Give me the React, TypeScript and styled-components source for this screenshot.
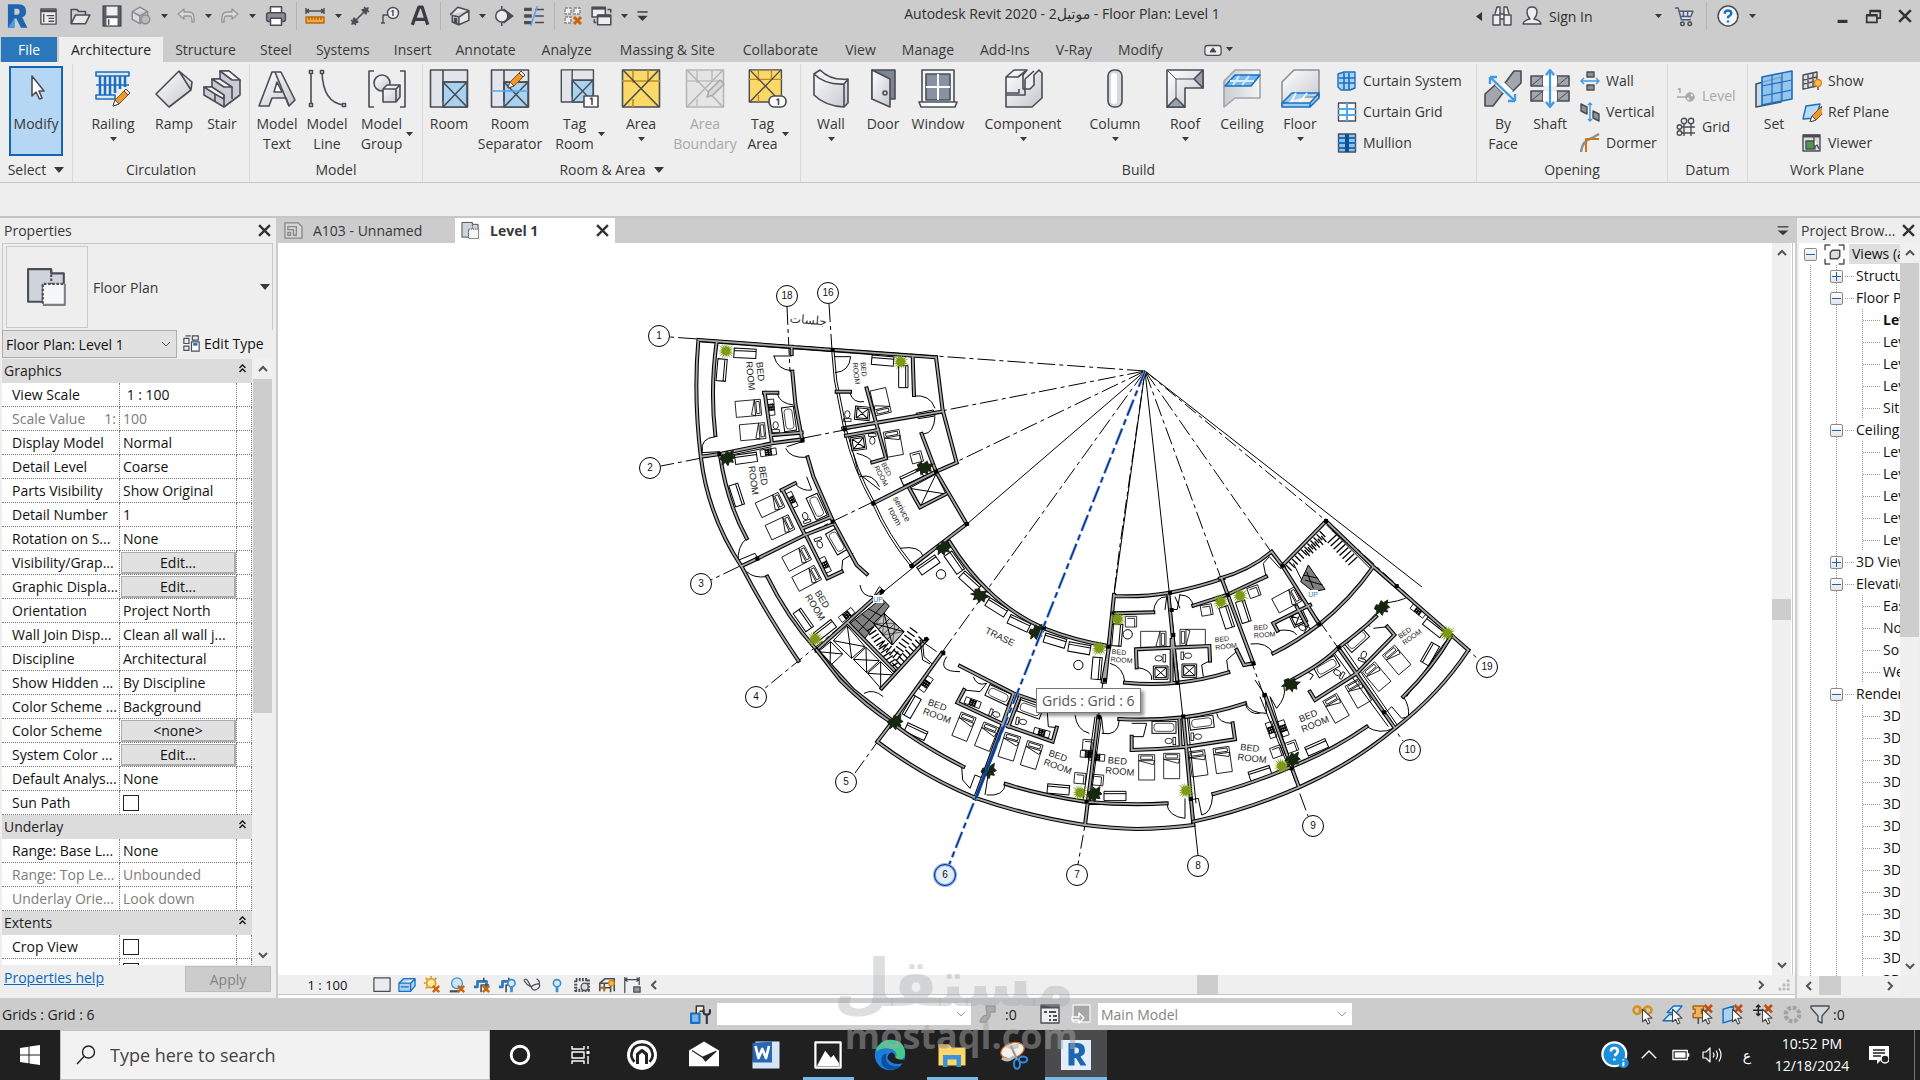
import React from "react";
import styled, { createGlobalStyle, css } from "styled-components";

const UI = `"Open Sans", "Noto Sans", "DejaVu Sans", sans-serif`;
const C = { bar: "#cccccc", light: "#eeeeee", line: "#c8c8c8", ink: "#383838", dark: "#4a4d55", blue: "#1b6fc0", sky: "#a9d1f0", task: "#202020" };

const Global = createGlobalStyle`
  *, *::before, *::after { box-sizing: border-box; }
  html, body { margin: 0; padding: 0; }
  body { font-family: ${UI}; font-size: 14px; color: ${C.ink}; overflow: hidden; }
  button, input, select { font: inherit; color: inherit; margin: 0; }
  button { border: 0; padding: 0; background: none; }
  svg { display: block; flex: none; }
`;

/* ---------- shared parts ---------- */
const Shell = styled.div`display: flex; flex-direction: column; height: 100vh; background: ${C.bar}; position: relative; overflow: hidden;`;
const IconButton = styled.button<{ $w?: number }>`
  display: flex; align-items: center; justify-content: center; flex: none; width: ${p => p.$w ?? 28}px; height: 100%;
`;
const Sep = styled.span<{ $w: number }>`width: ${p => p.$w}px; display: flex; justify-content: center; height: 28px; &::before { content: ""; width: 1px; background: #b4b4b4; }`;

type IcoProps = { s?: number; w?: number; vb?: string; children: React.ReactNode };
const Ico = ({ s = 22, w, vb = "0 0 20 20", children }: IcoProps) => (
  <svg width={w ?? s} height={s} viewBox={vb} fill="none" stroke={C.dark} strokeWidth="1.4" strokeLinejoin="round" aria-hidden="true">{children}</svg>
);
const Caret = ({ s = 7 }: { s?: number }) => (
  <svg width={s} height={s * 0.6} viewBox="0 0 10 6" aria-hidden="true"><path d="M0 0H10L5 6Z" fill="#3a3a3a" /></svg>
);
const Cross = ({ s = 13 }: { s?: number }) => (
  <svg width={s} height={s} viewBox="0 0 12 12" aria-hidden="true"><path d="M1 1L11 11M11 1L1 11" stroke="#333" strokeWidth="2.2" /></svg>
);
const Chevron = ({ r = 0, c = "#555", w = 2 }: { r?: number; c?: string; w?: number }) => (
  <svg width="10" height="10" viewBox="0 0 10 10" aria-hidden="true"><path d="M1 3L5 7L9 3" transform={`rotate(${r} 5 5)`} fill="none" stroke={c} strokeWidth={w} /></svg>
);

/* ---------- title bar ---------- */
const TitleBar = styled.header`display: flex; align-items: center; height: 37px; padding-bottom: 5px; flex: none; color: #2f2f2f;`;
const Title = styled.h1`flex: 1; margin: 0; padding-bottom: 6px; font-size: 14px; font-weight: 400; text-align: center; white-space: nowrap;`;
const SignIn = styled.button`display: flex; align-items: center; height: 100%; width: 104px; padding-left: 3px;`;
const WindowButtons = styled.div`display: flex; height: 100%; margin-left: 69px;`;

const cursor = <path d="M1 0V12L4 9.500L6 14L8 13L6 8.500H10Z" fill="#fff" stroke="#444" strokeWidth="1" />;
const qat: [string, number, React.ReactNode][] = [
  ["Revit menu", 34, <Ico s={26} key="i"><path d="M3 1H11Q17 1 17 6.500Q17 10 14 11L18 19H13L9.500 12H8V19H3Z" fill="#1f66b0" stroke="none" /><path d="M8 4.500H10Q12 4.500 12 6.700Q12 9 10 9H8Z" fill="#ccc" stroke="none" /><path d="M3 19L8 12V19Z" fill="#4f9be0" stroke="none" /></Ico>],
  ["Properties", 28, <Ico key="i" s={19}><rect x="2" y="2" width="16" height="16" fill="#eee" /><path d="M2 4H18" strokeWidth="3" /><path d="M5 7V16M8 9H16M10 12H16M10 15H16" /></Ico>],
  ["Open", 36, <Ico key="i"><path d="M2 17V4H7L9 6H15V9" /><path d="M2 17L6 9H19L15 17Z" fill="#e6e8ea" /></Ico>],
  ["Save", 28, <Ico key="i"><path d="M2 1H18V19H2Z" fill="#5b5e66" /><rect x="5" y="1.500" width="10" height="8" fill="#eee" stroke="none" /><rect x="5" y="12" width="10" height="6.500" fill="#fff" stroke="none" /><path d="M7 13V18" /></Ico>],
  ["Synchronize", 30, <Ico key="i"><g stroke="#8b8d92"><path d="M2 6L9 2L16 6V13L9 17L2 13ZM2 6L9 10L16 6M9 10V17" fill="#d9dadc" /><circle cx="14" cy="13" r="4" fill="#b9bbbf" /></g></Ico>],
  ["caret", 16, null],
  ["Undo", 28, <Ico key="i" s={20}><path d="M8 3L2 8L8 13V10H14Q16 10 16 16H18Q19 6 13 6H8Z" stroke="#96989c" fill="#dadada" /></Ico>],
  ["caret", 16, null],
  ["Redo", 28, <Ico key="i" s={20}><path d="M12 3L18 8L12 13V10H6Q4 10 4 16H2Q1 6 7 6H12Z" stroke="#96989c" fill="#dadada" /></Ico>],
  ["caret", 16, null],
  ["Print", 32, <Ico key="i"><rect x="5" y="1.500" width="10" height="6" fill="#fff" /><rect x="1.500" y="7" width="17" height="8" rx="2" fill="#8b8e95" /><rect x="5" y="12" width="10" height="6.500" fill="#fff" /></Ico>],
  ["sep", 8, null],
  ["Measure", 30, <Ico key="i" s={20}><path d="M1 5H19M1 2V8M19 2V8M4 3L1 5L4 7M16 3L19 5L16 7" /><rect x="1" y="11" width="18" height="6" fill="#f5a93c" stroke="#b56a10" /><path d="M4 11V14M7 11V14M10 11V14M13 11V14M16 11V14" stroke="#b56a10" /></Ico>],
  ["caret", 16, null],
  ["Aligned dimension", 28, <Ico key="i" s={20}><path d="M5 15L15 5" strokeWidth="1.600" /><path d="M2 18L4 12L8 16ZM18 2L12 4L16 8Z" fill={C.dark} /><path d="M1 14L6 19M14 1L19 6" /></Ico>],
  ["Tag by category", 32, <Ico key="i" s={20}><circle cx="13" cy="7" r="5.500" fill="#eee" /><path d="M11.500 5.500L13 4.500V10M8 9H3V17M1 17H5" /></Ico>],
  ["Text", 28, <Ico key="i"><path d="M3 18L9 2H12L17 18M5 13H15" strokeWidth="3" stroke="#3b3d44" /></Ico>],
  ["sep", 12, null],
  ["Default 3D view", 28, <Ico key="i"><path d="M1 9L8 2L18 5L18 14L9 18L3 15.500V9.500L9 11L18 5M9 11V18" fill="#e4e6e9" /><path d="M5 12V16L7 17V12.500Z" fill={C.dark} /></Ico>],
  ["caret", 16, null],
  ["Section", 28, <Ico key="i"><path d="M8 1V5M8 15V19M10 4L18 10L10 16Z" fill={C.dark} /><circle cx="8" cy="10" r="5.500" fill="#eee" /></Ico>],
  ["Thin lines", 32, <Ico key="i"><path d="M1 4H8M1 10H8M1 16H8" strokeWidth="3" /><path d="M11 4H19M11 10H19M11 16H19" /><path d="M13 1L7 19" stroke="#4fa8ee" /></Ico>],
  ["sep", 8, null],
  ["Close hidden windows", 30, <Ico key="i" s={20}><path d="M2 2H8V8H2ZM11 2H17V8H11ZM2 11H8V17H2Z" fill="#eee" stroke="#888" strokeDasharray="3 1" /><path d="M11 11L18 18M18 11L11 18" stroke="#c8640e" strokeWidth="3" /></Ico>],
  ["Switch windows", 28, <Ico key="i"><rect x="1" y="2" width="12" height="9" fill="#eee" /><path d="M1 3H13" strokeWidth="2.500" /><rect x="6" y="9" width="12" height="9" fill="#eee" /><path d="M6 10H18" strokeWidth="2.500" /><path d="M15 4H18V7M3 13V16H5" /></Ico>],
  ["caret", 16, null],
  ["Customize", 20, <Ico key="i" s={13}><path d="M2 3H18" strokeWidth="2.500" /><path d="M2 9H18L10 17Z" fill="#3a3a3a" stroke="none" /></Ico>],
];

/* ---------- ribbon tabs ---------- */
const Tabs = styled.nav`display: flex; align-items: stretch; height: 25px; flex: none; padding-left: 1px;`;
const Tab = styled.button<{ $kind?: "file" | "active"; $pad?: number }>`
  padding: 0 ${p => p.$pad ?? 12}px; white-space: nowrap; height: 25px; line-height: 24px; font-size: 14px; color: #3a3a3a;
  ${p => p.$kind === "file" && css`background: #2a77bb; color: #fff; width: 56px; padding: 0; margin-right: 2px;`}
  ${p => p.$kind === "active" && css`background: ${C.light}; color: #222;`}
`;
const tabNames: [string, number][] = [["Structure", 12], ["Steel", 12], ["Systems", 12], ["Insert", 12], ["Annotate", 12], ["Analyze", 14], ["Massing & Site", 14], ["Collaborate", 14], ["View", 13], ["Manage", 13], ["Add-Ins", 13], ["V-Ray", 13], ["Modify", 13]];

/* ---------- ribbon ---------- */
const Ribbon = styled.section`display: flex; height: 121px; flex: none; background: ${C.light}; border-bottom: 1px solid ${C.line}; padding-top: 2px;`;
const Panel = styled.div<{ $w: number; $pad: number }>`
  display: flex; flex-direction: column; flex: 0 0 ${p => p.$w}px; border-right: 1px solid #d8d8d8; padding-left: ${p => p.$pad}px;
  &:last-child { border-right: 0; }
`;
const PanelBody = styled.div`display: flex; flex: 1; align-items: flex-start;`;
const PanelTitle = styled.div<{ $shift: number }>`height: 24px; margin-left: -${p => p.$shift}px; display: flex; align-items: center; justify-content: center; gap: 8px; font-size: 14px; line-height: 20px;`;
const Tool = styled.button<{ $w: number; $on?: boolean }>`
  width: ${p => p.$w}px; height: 90px; margin-top: 2px; display: flex; flex-direction: column; align-items: center; flex: none; padding-top: 3px; font-size: 14px; line-height: 20px; white-space: nowrap;
  &:disabled { color: #a8a8a8; }
  ${p => p.$on && css`background: #b5d7f3; border: 2px solid #1465b4; padding-top: 1px;`}
`;
const ToolLabel = styled.span`margin: 5px 0 3px; display: flex; align-items: center; gap: 4px; text-align: center; white-space: pre;`;
const Stack = styled.div<{ $top: number; $left: number }>`display: flex; flex-direction: column; padding: ${p => p.$top}px 0 0 ${p => p.$left}px;`;
const SmallTool = styled.button`display: flex; align-items: center; gap: 6px; height: 31px; font-size: 14px; white-space: nowrap; &:disabled { color: #a8a8a8; }`;
const Options = styled.div`height: 33px; flex: none; background: ${C.light};`;

const Big = ({ children }: { children?: React.ReactNode }) => (
  <svg width="40" height="40" viewBox="0 0 40 40" fill="none" stroke={C.dark} strokeWidth="1.6" strokeLinejoin="round" aria-hidden="true">
    <defs>
      <linearGradient id="steel" x1="0" y1="0" x2="1" y2="1"><stop offset="0" stopColor="#ffffff" /><stop offset="1" stopColor="#c3c7cd" /></linearGradient>
      <linearGradient id="grey" x1="0" y1="0" x2="1" y2="0"><stop offset="0" stopColor="#c9cdd2" /><stop offset="1" stopColor="#f4f5f6" /></linearGradient>
    </defs>
    {children}
  </svg>
);
const Pencil = ({ x, y }: { x: number; y: number }) => (
  <g transform={`translate(${x} ${y})`} strokeWidth="1"><path d="M0 17L2 11L13 0L17 4L6 15Z" fill="#f0982c" stroke="#8a4a10" /><path d="M0 17L2 11L6 15Z" fill="#fff" /><path d="M11 2L15 6L17 4L13 0Z" fill="#fde2b8" /></g>
);
const RoomBase = ({ y = false, dim = false, s = 38 }: { y?: boolean; dim?: boolean; s?: number }) => (
  <g stroke={dim ? "#b5b5b5" : C.dark} transform={`scale(${s / 38})`}>
    <rect x="1.500" y="1" width="37" height="37" fill={dim ? "#e4e4e4" : y ? "#fbd966" : "#e2e5e9"} />
    {y || dim ? <><path d="M1 12H39M12 1V14M12 30V38M27 12V1" strokeWidth="1.600" stroke={dim ? "#c0c0c0" : "#c08a2a"} /><path d="M2 1L38 38M38 1L2 38" /></> : <><rect x="14" y="13" width="24" height="25" fill={C.sky} /><path d="M14 1V32M14 13H38M14 13L38 38M38 13L14 38" /></>}
  </g>
);
const icons: Record<string, React.ReactNode> = {
  modify: <path d="M16 7V27L20 23L23.500 30L26 29L23 22H28Z" fill="#fff" />,
  railing: <><path d="M7 7V26M12 7V26M17 7V26M22 7V24M27 7V20M32 7V18" stroke={C.blue} strokeWidth="2.600" /><path d="M3 3H36V7H3ZM3 26H22V30H3Z" fill="#dfe6ee" stroke={C.blue} /><path d="M3 16H36" stroke={C.blue} /><Pencil x={20} y={20} /></>,
  ramp: <path d="M2 25L25 2L38 13L37 21L15 38ZM25 2L37 21M2 25L15 38" fill="url(#steel)" />,
  stair: <><path d="M2 18H10L10 10H18V2H27L38 11V26L22 38L2 26Z" fill="#c9ccd2" /><path d="M2 18H10L22 26V30L13 25ZM10 10H18L30 18H22ZM18 2H27L38 11H30Z" fill="#f6f6f7" /><path d="M13 25V33M30 18V30M22 26V37" /></>,
  text: <><path d="M2 37L15 3H24L38 31L32 37L29 29H15L12 37Z" fill="url(#steel)" /><path d="M17 23L20 13L25 23Z" fill="#fff" /><path d="M18 3L32 37" /></>,
  line: <><path d="M4 3V36M15 3Q16 34 37 36" /><path d="M2.500 1.500H5.500V4.500H2.500ZM2.500 34.500H5.500V37.500H2.500ZM13.500 1.500H16.500V4.500H13.500ZM35.500 34.500H38.500V37.500H35.500Z" fill="#fff" /></>,
  group: <><path d="M7 2H2V38H7M33 2H38V38H33" /><circle cx="15" cy="14" r="8" fill="url(#steel)" /><path d="M16 20L20 16H33V28L29 33H16Z" fill="url(#steel)" /><path d="M16 20H29V33M29 20L33 16" /></>,
  room: <RoomBase />,
  roomsep: <><RoomBase /><path d="M1.500 22H38" stroke="#4fa8ee" /><Pencil x={18} y={2} /></>,
  tagroom: <><RoomBase s={33} /><rect x="24" y="27" width="14" height="11" fill="#fff" /><path d="M30 30L32 29V36" /></>,
  area: <RoomBase y />,
  areab: <><RoomBase dim /><path d="M22 28L24 22L35 11L39 15L28 26Z" fill="#d8d8d8" stroke="#aaa" /></>,
  tagarea: <><RoomBase y s={33} /><rect x="21" y="27" width="17" height="11" rx="5" fill="#fff" /><path d="M28.500 31L30.500 30V36" /></>,
  wall: <path d="M3 5L9 1Q20 12 37 10V34L33 38Q14 37 3 26ZM3 5Q14 16 33 15L37 10M33 15V38" fill="url(#steel)" />,
  door: <><path d="M9 1H32V30H9Z" fill="#7d8595" /><path d="M9 1L27 10V38L9 30Z" fill="url(#steel)" /><circle cx="22" cy="24" r="2" /></>,
  window: <><rect x="4" y="1" width="32" height="33" fill="#f4f4f4" /><rect x="8" y="5" width="24" height="26" fill="#8792a3" /><path d="M20 5V31M8 18H32" stroke="#fff" strokeWidth="2" /><path d="M1 33H39L37 38H3Z" fill="#fff" /></>,
  component: <path d="M3 8L11 1H24L20 6V20H27L31 16V6L36 1L39 4V29L29 38H3ZM3 8H15L24 1M3 24H16V20M22 10V26H3M22 10L31 2" fill="url(#steel)" />,
  column: <><rect x="13" y="1" width="14" height="37" rx="6" fill="#d5d8dd" /><rect x="16" y="4" width="6" height="31" rx="3" fill="#fff" stroke="none" /></>,
  roof: <><path d="M2 1H38V19H20V38H2Z" fill="url(#steel)" /><path d="M38 1V19L29 10ZM2 38H20L11 29Z" fill="#9aa1ad" /><path d="M2 1L11 10V29M11 10H29M11 29L2 38M29 10L38 1" strokeWidth="1" /></>,
  ceiling: <><path d="M2 12L13 1H38V29H13L2 38Z" fill="url(#grey)" stroke="#a0a4aa" /><path d="M13 6H38L29 17H3Z" fill="#78b8ee" stroke={C.blue} /><path d="M17 7L11 16M27 7L20 16M8 12H32" stroke="#d7edff" strokeWidth="2" /></>,
  floor: <><path d="M2 13L14 1H39V28H14L2 36Z" fill="url(#steel)" stroke="#8d9198" /><path d="M12 24H39L30 34H2ZM2 34V38H30L39 29V24M30 34V38" fill="#9ccdf2" stroke={C.blue} /><path d="M16 24L11 33M27 24L20 33" stroke="#fff" /></>,
  byface: <><path d="M22 14L31 2H38V14L30 22ZM2 25L12 16L20 24L10 37H2Z" fill="#a2a6ad" /><path d="M12 16L22 14L30 22L20 24Z" fill="#fff" stroke="none" /><path d="M7 8L32 32M7 8V15M7 8H14M32 32V25M32 32H25" stroke="#3f9be6" strokeWidth="2.400" /></>,
  shaft: <><path d="M1 7H13V17H1ZM27 7H39V17H27ZM1 22H13V32H1ZM27 22H39V32H27Z" fill="#a2a6ad" /><path d="M13 7H27V17H13ZM13 22H27V32H13Z" fill="#fff" stroke="none" /><path d="M1 17L13 7M27 17L39 7M1 32L13 22M27 32L39 22" strokeWidth="1" /><path d="M20 2V37M16 6L20 1L24 6M16 33L20 38L24 33" stroke="#3f9be6" strokeWidth="2.200" /></>,
  set: <><path d="M2 15L27 8V33L2 38Z" fill="#c7ddee" /><path d="M8 8L38 2V30L8 36Z" fill="#82bcea" fillOpacity=".8" stroke={C.blue} /><path d="M18 6V34M28 4V32M8 17L38 11M8 27L38 21" stroke={C.blue} strokeWidth="1.200" /></>,
};
const small: Record<string, React.ReactNode> = {
  "Curtain System": <><path d="M1 3L7 1H18V17L13 19H4L1 16Z" fill="#a9d1f0" stroke={C.blue} /><path d="M2 7H18M2 12H18M7 2V19M12 2V19" stroke={C.blue} strokeWidth="1.600" /></>,
  "Curtain Grid": <><rect x="1.500" y="1" width="17" height="18" fill="#fff" /><path d="M10 1V19M1 7H19M1 13H19" stroke="#4fa8ee" strokeWidth="2" /></>,
  Mullion: <><rect x="1.500" y="1" width="17" height="18" fill="#8fc1ea" /><path d="M1 5H19M1 10H19M1 15H19" stroke={C.blue} strokeWidth="2" /><path d="M10 1V19" stroke="#0f4f96" strokeWidth="4" /></>,
  Wall: <><path d="M7 1H14V6H7ZM7 14H14V19H7Z" fill="#8d9097" /><path d="M1 10H19M4 7L1 10L4 13M16 7L19 10L16 13" stroke="#3f9be6" /></>,
  Vertical: <><path d="M1 2L7 5V12L1 9ZM13 9L19 12V19L13 16Z" fill="#8d9097" /><path d="M10 1V19M8 3L10 1L12 3M8 17L10 19L12 17" stroke="#3f9be6" /></>,
  Dormer: <><path d="M1 19Q2 8 12 5L19 1" stroke="#8d9097" strokeWidth="2.500" /><path d="M6 19V6H19" stroke="#c8781e" strokeWidth="2" /></>,
  Level: <g stroke="#a8a8a8"><path d="M1 11H10M2 3.500L4 2.500V7" /><circle cx="14" cy="11" r="4" /><path d="M10 11H14V7ZM14 11H18L14 15Z" fill="#a8a8a8" /></g>,
  Grid: <><path d="M8 7V19M15 7V19M6 10H19M6 16H19" /><circle cx="8" cy="4" r="2.700" /><circle cx="15" cy="4" r="2.700" /><circle cx="3.500" cy="10" r="2.300" /><circle cx="3.500" cy="16" r="2.300" /></>,
  Show: <><path d="M1 4L15 1V15L1 18ZM6 3V17M11 2V16M1 9L15 6M1 13L15 10" fill="#dcdcdc" /><circle cx="16" cy="12" r="3.500" fill="#ffc04a" stroke="#d98318" /><path d="M16 16V19" /></>,
  "Ref Plane": <><path d="M4 4L18 2L14 16L1 17Z" fill="#b8daf5" stroke={C.blue} /><Pencil x={8} y={3} /></>,
  Viewer: <><rect x="1" y="2" width="17" height="16" fill="#ddd" /><path d="M1 3H18" strokeWidth="3" /><rect x="4" y="8" width="9" height="8" fill="#4c9a4c" /><path d="M12 4V14L15 12L17 16" fill="#fff" /></>,
};
type ToolDef = [label: string, icon: string, width: number, arrow?: "below" | "side", off?: boolean];
const ToolButton = ({ d }: { d: ToolDef }) => (
  <Tool $w={d[2]} disabled={d[4]} $on={d[1] === "modify"}>
    <Big>{icons[d[1]]}</Big>
    <ToolLabel>{d[0]}{d[3] === "side" && <Caret />}</ToolLabel>
    {d[3] === "below" && <Caret />}
  </Tool>
);
const SmallList = ({ names, top = 1, left, off }: { names: string[]; top?: number; left: number; off?: string }) => (
  <Stack $top={top} $left={left}>{names.map(n => <SmallTool key={n} disabled={n === off}><Ico s={20}>{small[n]}</Ico>{n}</SmallTool>)}</Stack>
);
const P = ({ title, w, pad, tools, arrow, children }: { title: string; w: number; pad: number; tools: ToolDef[]; arrow?: boolean; children?: React.ReactNode }) => (
  <Panel $w={w} $pad={pad}>
    <PanelBody>{tools.map(t => <ToolButton key={t[0]} d={t} />)}{children}</PanelBody>
    <PanelTitle $shift={pad}>{title}{arrow && <Caret s={10} />}</PanelTitle>
  </Panel>
);

/* ---------- work area ---------- */
const Work = styled.main`display: flex; flex: 1; min-height: 0; border-top: 2px solid #c6c6c6;`;
const PaneHead = styled.div`display: flex; align-items: center; justify-content: space-between; height: 25px; flex: none; padding: 0 5px 0 4px; font-size: 14px; white-space: nowrap;`;
const Props = styled.aside`width: 276px; flex: none; background: ${C.light}; display: flex; flex-direction: column; margin-right: 2px;`;
const TypeBox = styled.button`display: flex; align-items: center; height: 87px; flex: none; margin: 0 3px 0 2px; border: 1px solid ${C.line}; border-bottom: 0; padding: 2px 2px 2px 3px; text-align: left;`;
const Thumb = styled.span`width: 82px; height: 82px; border: 1px solid #c9c9c9; display: flex; align-items: center; justify-content: center; margin-right: 5px;`;
const Grow = styled.span`flex: 1;`;
const InstanceRow = styled.div`display: flex; height: 29px; flex: none; padding: 0 0 1px 2px; gap: 6px; align-items: center; color: #111;`;
const SelectBox = styled.span<{ $w: number; $white?: boolean }>`
  display: grid; width: ${p => p.$w}px; height: ${p => (p.$white ? 22 : 28)}px; align-items: center; background: ${p => (p.$white ? "#fff" : "#e1e1e1")}; border: ${p => (p.$white ? 0 : 1)}px solid #adadad;
  > * { grid-area: 1 / 1; } > svg { justify-self: end; margin-right: 5px; pointer-events: none; }
`;
const Select = styled.select`appearance: none; border: 0; background: transparent; width: 100%; height: 100%; padding: 0 20px 0 3px; outline: 0; font-size: 14px;`;
const EditType = styled.button`display: flex; align-items: center; gap: 4px; height: 26px; padding-bottom: 2px;`;
const GridWrap = styled.div`flex: 1; min-height: 0; display: flex; padding: 0 4px 0 2px;`;
const TableClip = styled.div`flex: 1; overflow: hidden; background: #fff; margin-right: 1px;`;
const Table = styled.table`width: 250px; table-layout: fixed; border-collapse: separate; border-spacing: 0; font-size: 14px; color: #111;`;
const Section = styled.th`height: 24px; padding: 0; background: #dcdcdc; font-weight: 400; text-align: left; color: #222; > span { display: flex; align-items: center; justify-content: space-between; padding: 0 6px 0 2px; line-height: 22px; } svg { margin-bottom: 6px; }`;
const Cell = styled.td<{ $dim?: boolean; $name?: boolean }>`
  height: 24px; padding: 0 0 0 ${p => (p.$name ? 10 : 3)}px; line-height: 20px; white-space: pre; overflow: hidden; border-bottom: 1px dotted #777; border-right: 1px dotted #777; color: ${p => (p.$dim ? "#7d7d78" : "#111")};
`;
const NameLine = styled.label`display: flex; justify-content: space-between; padding-right: 3px;`;
const CellButton = styled.button`display: block; width: 115px; height: 22px; margin: 1px 0 0 -2px; line-height: 19px; background: #e1e1e1; border: 1px solid #adadad; border-right-width: 2px; border-bottom-width: 2px;`;
const Check = styled.input`appearance: none; display: block; width: 16px; height: 16px; border: 1px solid #222; background: #fff;`;
const Foot = styled.div`height: 33px; flex: none; display: flex; align-items: center; justify-content: space-between; padding: 0 5px 5px 4px; a { color: #0a66c0; height: 22px; } button { width: 86px; height: 26px; background: ${C.bar}; border: 1px solid #bdbdbd; color: #838383; }`;

const VBar = styled.div<{ $center?: boolean; $t: string }>`
  width: 19px; flex: none; background: #f0f0f0; display: flex; flex-direction: column;
  > button { height: 20px; display: flex; align-items: center; justify-content: center; }
  > div { flex: 1; min-height: 0; display: flex; flex-direction: column; justify-content: ${p => (p.$center ? "center" : "flex-start")}; }
  > div > span { height: ${p => p.$t}; background: #cdcdcd; }
`;
const VScroll = ({ t, center }: { t: string; center?: boolean }) => (
  <VBar $t={t} $center={center}><button aria-label="Scroll up"><Chevron r={180} /></button><div><span /></div><button aria-label="Scroll down"><Chevron /></button></VBar>
);

const propRows: (string | [string, string, ("dim" | "btn" | "check")?])[] = [
  "Graphics", ["View Scale", " 1 : 100"], ["Scale Value|1:", "100", "dim"], ["Display Model", "Normal"], ["Detail Level", "Coarse"], ["Parts Visibility", "Show Original"],
  ["Detail Number", "1"], ["Rotation on S...", "None"], ["Visibility/Grap...", "Edit...", "btn"], ["Graphic Displa...", "Edit...", "btn"], ["Orientation", "Project North"],
  ["Wall Join Disp...", "Clean all wall j..."], ["Discipline", "Architectural"], ["Show Hidden ...", "By Discipline"], ["Color Scheme ...", "Background"], ["Color Scheme", "<none>", "btn"],
  ["System Color ...", "Edit...", "btn"], ["Default Analys...", "None"], ["Sun Path", "", "check"], "Underlay", ["Range: Base L...", "None"], ["Range: Top Le...", "Unbounded", "dim"],
  ["Underlay Orie...", "Look down", "dim"], "Extents", ["Crop View", "", "check"], ["", "", "check"],
];
const PlanIcon = ({ s }: { s: number }) => (
  <Ico s={s}>
    <path d="M1 1.500H12V3.500H18V9H8V17H1Z" fill="#cfd4da" strokeWidth="1" />
    <rect x="8" y="8.500" width="10.500" height="10" fill="#f6f7f8" stroke="none" />
    <path d="M18.500 8.500V18.500H8" strokeWidth="1" stroke="#7d8087" />
    <path d="M12 2V8.500M8 18V8.500H18" strokeWidth="1" strokeDasharray="1.200 .8" />
  </Ico>
);

function PropertiesPane() {
  return (
    <Props>
      <PaneHead>Properties<button aria-label="Close properties"><Cross /></button></PaneHead>
      <TypeBox><Thumb><PlanIcon s={42} /></Thumb>Floor Plan<Grow /><Caret s={10} /></TypeBox>
      <InstanceRow>
        <SelectBox $w={175}><Select aria-label="Instance"><option>Floor Plan: Level 1</option></Select><Chevron w={1} /></SelectBox>
        <EditType><Ico s={17}><path d="M1 4H7V10H1ZM3 1H9M11 1H18V6H11ZM1 13H7V18H1Z" fill="#eee" /><rect x="10" y="8" width="9" height="11" fill="#fff" /><path d="M12 11H17" stroke={C.blue} strokeWidth="3" /></Ico>Edit Type</EditType>
      </InstanceRow>
      <GridWrap>
        <TableClip>
          <Table>
            <colgroup><col width="118" /><col width="117" /><col width="15" /></colgroup>
            <tbody>
              {propRows.map((r, i) => {
                if (typeof r === "string") return (
                  <tr key={i}><Section colSpan={3} scope="rowgroup"><span>{r}<svg width="7" height="9" viewBox="0 0 7 9" aria-hidden="true"><path d="M.5 4L3.500 1L6.500 4M.5 8L3.500 5L6.500 8" fill="none" stroke="#111" strokeWidth="1.300" /></svg></span></Section></tr>
                );
                const [n, v, k] = r;
                const [a, b] = n.split("|");
                return (
                  <tr key={i}>
                    <Cell $name $dim={k === "dim"}><NameLine htmlFor={k === "check" ? `p${i}` : undefined}>{a}{b && <span>{b}</span>}</NameLine></Cell>
                    <Cell $dim={k === "dim"}>
                      {k === "btn" ? <CellButton>{v}</CellButton> : k === "check" ? <Check type="checkbox" id={`p${i}`} aria-label={a || "Crop region"} /> : v}
                    </Cell>
                    <Cell />
                  </tr>
                );
              })}
            </tbody>
          </Table>
        </TableClip>
        <VScroll t="59%" />
      </GridWrap>
      <Foot><a href="#help">Properties help</a><button disabled>Apply</button></Foot>
    </Props>
  );
}

/* ---------- document area ---------- */
const Doc = styled.section`flex: 1; min-width: 0; display: flex; flex-direction: column; background: ${C.bar};`;
const DocTabs = styled.div`display: flex; height: 25px; flex: none; align-items: stretch;`;
const DocTab = styled.button<{ $on?: boolean }>`
  width: ${p => (p.$on ? 160 : 177)}px; display: flex; align-items: center; gap: 10px; padding: 0 6px; text-align: left; font-size: 14px;
  background: ${p => (p.$on ? "#fff" : "transparent")}; font-weight: ${p => (p.$on ? 700 : 400)};
`;
const CanvasRow = styled.div`flex: 1; min-height: 0; display: flex; background: #fff; padding-right: 2px; border-right: 2px solid #fff; box-shadow: inset -1px 0 #c8c8c8;`;
const Canvas = styled.div`flex: 1; min-width: 0; position: relative; > svg { width: 100%; height: 100%; }`;
const Tip = styled.div`position: absolute; left: 758px; top: 445px; height: 25px; padding: 0 5px; line-height: 23px; background: #fff; border: 1px solid #767676; color: #575757; font-size: 14px; box-shadow: 3px 3px 3px rgba(0,0,0,.4); white-space: nowrap;`;
const ViewBar = styled.div`height: 20px; flex: none; display: flex; align-items: center; background: #efefef; border-bottom: 1px solid #c4c4c4; padding-right: 4px;`;
const Scale = styled.button`width: 91px; padding-left: 8px; font-size: 13px; color: #111; white-space: nowrap;`;
const HTrack = styled.div`flex: 1; align-self: stretch; display: flex; justify-content: center; > span { width: 21px; background: #cdcdcd; }`;
const ScrollEnd = styled(IconButton)`margin-right: 6px;`;
const DocEdge = styled.div`height: 3px; background: #fff; flex: none;`;

/* Floor plan. Each wing has its own local frame, three units to a pixel. */
const wingA = {
  walls: "M175 210L888 262M175 212Q160 380 183 565Q205 740 305 890Q375 1025 475 1172M230 215Q210 360 226 495M240 556Q262 700 320 805M382 920Q440 1040 530 1140L640 1260L755 1350M455 230V252M457 305L466 400L487 512M372 368H412M374 368L396 520M396 495L485 488M396 520L487 508M183 560L240 552L396 520M503 562L520 620L578 752L650 885L680 912M425 660L465 640M428 660L495 795M488 775L570 742M495 795L580 762M500 800L562 925L605 905M305 888L352 866L495 795M888 262L908 420L950 578M818 258L822 375M610 475L905 425M590 365H630M680 355L710 465L738 565L697 577M618 497L715 480M845 492L888 605L980 762M950 578L888 605L700 700M980 762L815 888M808 655L840 712L918 672M725 965L530 1140M625 1060L762 1200M860 1108L725 1255",
  thin: "M575 240L583 330L612 480Q640 600 697 700Q740 800 812 888M582 240L590 330L620 480Q648 600 704 698Q746 796 818 884M183 548L240 545M400 258H455M402 258Q412 300 455 302M585 260H632Q628 305 585 308M187 545Q180 505 226 500M820 378Q870 372 885 415M885 440Q882 490 850 492M437 535Q450 565 500 562M412 372Q420 400 460 405M440 530L487 515M295 880Q290 830 320 805M320 905Q340 925 380 920M465 642Q490 665 515 660L500 620M605 905L608 870L640 850M660 945Q665 980 700 980L718 950L735 965M640 550L655 610L720 660M650 550Q690 560 697 577M660 620Q700 610 718 650M780 835Q840 825 850 860M815 888L880 840M630 370Q640 400 672 395M848 1120L852 1160L880 1185M297 870L345 850L355 868M575 1190L700 1320M828 430L880 420L885 438L835 446ZM390 500L480 490M185 216L700 254M240 562L395 530",
  cells: [[535, 1145, 572, 1115, 608, 1152, 570, 1188], [580, 1112, 622, 1068, 675, 1130, 635, 1165], [640, 1168, 678, 1132, 718, 1172, 680, 1208], [683, 1210, 722, 1175, 762, 1215, 722, 1255], [808, 655, 888, 612, 918, 672, 840, 712], [700, 1060, 732, 1030, 765, 1060, 728, 1095], [728, 1095, 765, 1060, 792, 1085, 757, 1125]],
};
const wingB = {
  walls: "M328 5Q380 90 445 152Q520 225 612 265Q700 300 805 318M305 340L155 548L112 605M-70 330L0 420Q80 500 155 548Q250 620 370 680M112 605Q250 710 410 775Q570 830 735 855Q820 865 890 867Q980 866 1060 855M497 732Q600 765 735 785Q860 797 980 790M360 378L520 460L600 488M372 450L352 488L495 555L638 605L650 563M520 462L485 560M540 468L505 560M485 560L405 775M775 530L735 855M822 165L795 425M808 320L788 425M822 168Q910 172 990 158Q1080 140 1150 115M820 220L940 217M985 160L1012 428M995 300V425M888 328L1108 318L1110 362M888 328L890 382M855 428Q940 436 1012 428Q1090 420 1165 397M838 537Q930 542 1030 532Q1130 518 1215 490M875 590V630Q960 628 1040 620L1185 598L1178 550M1030 530L1060 855M1018 535L1022 620",
  thin: "M785 530L750 790M765 530L728 790M1042 530L1068 790M290 335L240 300L248 360L270 372M320 350Q290 395 360 395M400 410Q410 440 440 430L420 455L372 450M365 680L368 720L390 745L405 705L430 715M440 765Q490 770 497 732M435 765L445 700M620 490L625 560L650 563M705 525Q710 570 748 580M785 580Q835 590 838 540M790 580L785 535M940 217Q945 170 980 170L975 210M1005 170L1020 205M1020 162L1012 208L985 210M1020 165Q1055 165 1060 200M810 370Q850 380 855 428M890 382Q940 390 935 420M1110 362L1085 375L1090 410M1165 397L1160 360L1195 330M875 550H920L910 590H875M1130 520Q1135 550 1178 550M1215 490Q1225 525 1260 520M980 790Q985 830 1035 835V775M1085 825L1075 775L1050 780M1085 825Q1115 820 1118 765M72 460Q100 445 130 470",
  cells: [],
};
const wingC = {
  walls: "M420 235Q510 210 575 155L607 197L738 63L880 200L1165 450M880 200Q810 300 718 373Q650 425 580 460M607 197L718 373M340 317L425 290L440 285L558 230M425 235L520 490L492 495L470 450M580 370L690 315M580 370L592 392M555 585L657 862M635 540Q730 490 775 443Q840 395 888 350M775 443L945 685M690 575L705 600L830 520L943 405L922 380M340 965Q500 930 657 862Q820 790 945 685Q1080 580 1165 450M400 882Q520 850 635 800Q760 750 860 680M970 590Q1060 500 1112 410M650 320L680 375",
  thin: "M570 590L635 800M540 590L625 800M760 455L925 680M790 440L955 680M568 170L550 190L558 230M568 170L600 205L618 200M512 432Q560 425 580 460M525 540L555 585M497 610Q510 640 560 640L555 590M570 590L590 625Q620 590 612 560M690 540L700 525L680 515L635 540M590 392Q640 385 650 405M870 380L860 370L888 340M925 380L880 385M905 310Q960 305 985 290M970 590Q990 620 985 650L965 655L935 620L915 640M860 680Q900 705 940 685M740 75L870 205M755 90L965 270M1112 405L1085 440L980 590",
  cells: [],
};
type V3 = [number, number, number];
const beds: V3[][] = [
  [[325, 415, 85], [338, 485, 85], [390, 705, 65], [420, 772, 65], [470, 865, 62], [500, 925, 62], [722, 395, 167], [760, 520, -10]],
  [[372, 560, 22], [440, 590, 22], [508, 620, 17], [575, 645, 17], [920, 682, 0], [995, 678, 0], [1075, 670, -8], [1148, 660, -8], [940, 298, 90], [1058, 292, -90]],
  [[768, 625, -30], [835, 580, -30], [890, 530, -40], [950, 480, -40], [620, 300, 62]],
];
const tubs: V3[][] = [[[447, 447, -8], [530, 710, -25], [590, 815, -30]], [[475, 465, 115], [570, 508, 110], [972, 562, 90], [1085, 548, 83]], [[830, 420, 48], [740, 500, 60]]];
const showers: V3[][] = [[[667, 430, 5], [655, 520, -8]], [[962, 398, 0], [1048, 392, 0]], [[655, 355, -25]]];
const wcs: V3[][] = [[[407, 470, 0], [497, 742, -20], [538, 820, 160], [622, 437, 0], [697, 508, 180]], [[465, 522, 110], [545, 545, 100], [960, 355, -90], [1040, 347, 90], [990, 603, -90], [1070, 590, 90]], [[775, 520, -60], [850, 468, 20], [670, 385, -60]]];
const sofas: V3[][] = [
  [[315, 250, 3], [245, 300, 95], [728, 272, 5], [790, 320, 90], [318, 565, -8], [290, 675, 72], [490, 1050, 55], [555, 1080, -38], [815, 620, -25], [865, 885, -35], [943, 878, 55], [990, 935, 42], [1070, 1012, 32], [1137, 1060, 25]],
  [[215, 500, -60], [228, 575, 25], [655, 748, 5], [825, 768, 0], [645, 302, 17], [718, 325, 10], [770, 385, 95], [832, 285, 95]],
  [[1062, 382, 38], [1050, 462, -60], [710, 742, -24], [540, 820, -18], [490, 335, 72], [440, 352, 72]],
];
const chairs: V3[][] = [[[830, 562, -15]], [[873, 245, 0], [720, 715, 5], [773, 720, 5], [745, 615, 5]], [[522, 275, -20], [380, 330, -10], [635, 740, -20], [590, 755, -20]]];
const hobs: V3[][] = [[[385, 547, -8], [620, 1035, -38], [455, 690, 65], [555, 885, 65], [393, 412, 85]], [[258, 432, -55], [398, 488, 20], [605, 578, 15], [745, 643, 5], [770, 652, 5]], [[1015, 332, 38], [573, 690, 70], [610, 685, 70]]];
const tables: V3[][] = [[[903, 913, 0]], [[715, 375, 0], [863, 283, 0]], []];
const bright: V3[][] = [[[258, 243, 0], [782, 275, 0], [525, 1107, 0]], [[833, 237, 0], [777, 325, 0], [720, 758, 0], [1038, 752, 0]], [[1102, 400, 0], [605, 798, 0], [480, 287, 0], [422, 305, 0]]];
const shade: V3[][] = [[[262, 563, 0], [853, 592, 30], [910, 832, 0], [1020, 975, 60]], [[588, 275, 0], [165, 545, 0], [445, 692, 0], [762, 762, 0]], [[905, 322, 0], [632, 552, 40], [637, 778, 0]]];
const dots: V3[][] = [
  [[487, 510, 0], [578, 755, 0], [615, 478, 0], [700, 700, 0], [888, 605, 0], [980, 762, 0], [815, 888, 0], [352, 866, 0], [725, 965, 0], [858, 1108, 0], [908, 1150, 0], [530, 1142, 0], [578, 240, 0], [1045, 962, 0], [238, 552, 0]],
  [[612, 263, 0], [805, 320, 0], [530, 466, 0], [310, 338, 0], [437, 700, 0], [778, 532, 0], [820, 220, 0], [990, 158, 0], [995, 210, 0], [1000, 285, 0], [1012, 428, 0], [1030, 530, 0], [1052, 777, 0], [795, 420, 0], [740, 785, 0], [155, 548, 0]],
  [[738, 63, 0], [607, 197, 0], [718, 373, 0], [777, 443, 0], [443, 285, 0], [520, 490, 0], [553, 586, 0], [635, 805, 0], [912, 637, 0], [950, 258, 0], [1112, 405, 0]],
];
type Lab = [x: number, y: number, r: number, size: number, lines: string[]];
const labels: Lab[][] = [
  [[348, 312, 84, 28, ["BED", "ROOM"]], [661, 305, 84, 21, ["BED", "ROOM"]], [357, 625, 82, 28, ["BED", "ROOM"]], [733, 608, 62, 21, ["BED", "ROOM"]], [777, 728, 62, 26, ["serivce", "room"]], [538, 1000, 58, 28, ["BED", "ROOM"]]],
  [[480, 290, 26, 28, ["TRASE"]], [293, 510, 20, 28, ["BED", "ROOM"]], [655, 662, 20, 28, ["BED", "ROOM"]], [837, 677, 5, 28, ["BED", "ROOM"]], [842, 347, 5, 21, ["BED", "ROOM"]], [1153, 307, -6, 21, ["BED", "ROOM"]]],
  [[514, 758, 6, 28, ["BED", "ROOM"]], [695, 658, -22, 28, ["BED", "ROOM"]], [985, 403, -36, 21, ["BED", "ROOM"]], [549, 392, -4, 21, ["BED", "ROOM"]]],
];
const at = ([x, y, r]: V3) => `translate(${x} ${y}) rotate(${r})`;
const burst = Array.from({ length: 36 }, (_, i) => {
  const r = i % 2 ? 12 : 21 + ((i * 7) % 5) * 2;
  const t = (i * Math.PI) / 18;
  return `${(Math.cos(t) * r).toFixed(1)},${(Math.sin(t) * r).toFixed(1)}`;
}).join(" ");

const Wing = ({ i, ox, oy, d }: { i: number; ox: number; oy: number; d: { walls: string; thin: string; cells: number[][] } }) => (
  <g transform={`translate(${ox} ${oy}) scale(.33333)`} fill="none" stroke="#000" strokeWidth="3">
    {beds[i].map((b, k) => <g key={k} transform={at(b)}><path d="M-24 -38H24V38H-24ZM-24 -20H24M-24 -20L20 -8L24 -20M-18 -34H18V-24H-18Z" strokeWidth="2.400" /></g>)}
    {tubs[i].map((b, k) => <g key={k} transform={at(b)}><rect x="-18" y="-36" width="36" height="72" /><rect x="-12" y="-30" width="24" height="60" rx="9" strokeWidth="2" /></g>)}
    {showers[i].map((b, k) => <g key={k} transform={at(b)}><path d="M-22 -20H22V20H-22ZM-17 -15H17V15H-17ZM-17 -15L17 15M17 -15L-17 15" /></g>)}
    {wcs[i].map((b, k) => <g key={k} transform={at(b)} strokeWidth="2.400"><ellipse cx="0" cy="-4" rx="8" ry="11" /><rect x="-11" y="9" width="22" height="8" /></g>)}
    {sofas[i].map((b, k) => <g key={k} transform={at(b)}><path d="M-33 -14H33V14H-33ZM-33 -7H33" /></g>)}
    {chairs[i].map((b, k) => <g key={k} transform={at(b)}><path d="M-17 -16H17V16H-17ZM-11 -10H11V16" strokeWidth="2.400" /></g>)}
    {tables[i].map((b, k) => <circle key={k} cx={b[0]} cy={b[1]} r="14" />)}
    {hobs[i].map((b, k) => <g key={k} transform={at(b)}><path d="M-24 -10H24V10H-24Z" strokeWidth="2.400" /><path d="M-11 -6H11M-11 0H11M-11 6H11M-8 -10V10M0 -10V10M8 -10V10" strokeWidth="4" /></g>)}
    <path d={d.thin} />
    {d.cells.map((c, k) => <path key={k} d={`M${c[0]} ${c[1]}L${c[2]} ${c[3]}L${c[4]} ${c[5]}L${c[6]} ${c[7]}ZM${c[0]} ${c[1]}L${c[4]} ${c[5]}M${c[2]} ${c[3]}L${c[6]} ${c[7]}`} />)}
    {i === 0 && <>
      <path d="M628 1062L725 985L748 1008L675 1105Z" fill="#808080" />
      <path d="M645 1048L690 1090M665 1032L708 1065M685 1016L728 1040M655 1085L735 998" />
      <path d="M690 1075L765 1190M725 1120L780 1165" strokeWidth="26" strokeDasharray="4 9" />
      <path d="M765 1190L850 1105M770 1150L825 1075" strokeWidth="28" strokeDasharray="4 10" />
      <path d="M700 1060L757 1125L792 1085L732 1030Z" fill="#999" fillOpacity=".6" />
      <path d="M700 1060L792 1085M757 1125L732 1030M715 1078L750 1045M742 1108L778 1072" />
    </>}
    {i === 2 && <>
      <path d="M625 205L730 100M680 160L740 110" strokeWidth="24" strokeDasharray="4 9" />
      <path d="M755 115L820 185" strokeWidth="36" strokeDasharray="4 9" />
      <path d="M685 195L735 268L700 275L662 245Z" fill="#808080" />
      <path d="M640 190L665 240M680 215L700 265M670 225L715 235M675 240L728 255" />
    </>}
    <g strokeLinecap="square" strokeLinejoin="miter"><path d={d.walls} strokeWidth="12" /><path d={d.walls} stroke="#a6a6a6" strokeWidth="5.500" /></g>
    {dots[i].map((b, k) => <rect key={k} x={b[0] - 6} y={b[1] - 6} width="12" height="12" fill="#000" stroke="none" />)}
    {shade[i].map((b, k) => <path key={k} transform={at(b)} d="M-22 4L-16 -8L-8 -6L-2 -20L6 -14L18 -22L16 -8L24 0L14 4L18 14L6 12L2 24L-6 14L-16 22L-14 10Z" fill="#16260f" stroke="#16260f" />)}
    {bright[i].map((b, k) => <polygon key={k} transform={at(b)} points={burst} fill="#7c9a16" stroke="none" />)}
    <g fill="#222" stroke="none" fontFamily="Liberation Sans, Arial, sans-serif" textAnchor="middle">
      {labels[i].map(([x, y, r, s, ls], k) => (
        <g key={k} transform={`translate(${x} ${y}) rotate(${r})`} fontSize={s}>
          {ls.map((t, n) => <text key={n} x={n ? 4 : ls.length > 1 ? -6 : 0} y={ls.length === 1 ? s * 0.35 : n ? s * 0.95 : -s * 0.15}>{t}</text>)}
        </g>
      ))}
    </g>
  </g>
);
const bubbles: [string, number, number][] = [["18", 787, 296], ["16", 828, 293], ["1", 659, 336], ["2", 650, 468], ["3", 701, 584], ["4", 756, 697], ["5", 846, 782], ["7", 1077, 875], ["8", 1198, 866], ["9", 1313, 826], ["10", 1410, 750], ["19", 1487, 667]];

const FloorPlan = () => (
  <svg viewBox="278 243 1494 732" role="img" aria-label="Level 1 floor plan">
    <g fill="none" stroke="#000" strokeWidth="1">
      <path d="M1145 371L670 337M1145 371L661 466M1145 371L711 580M1145 371L855 773M1145 371L1308 816M1145 371L1403 741M787 307L790 372M829 304L832 350" strokeDasharray="18 4 4 4" />
      <path d="M1145 371L967 524L883 592M1145 371L1198 855M1145 371L1422 587M1145 371L1114 595" />
      <path d="M883 592L764 689M1145 371L1120 545L1085 825L1078 864M1145 371L1330 524L1479 660" strokeDasharray="14 4 4 4" />
    </g>
    <Wing i={0} ox={640} oy={270} d={wingA} />
    <Wing i={1} ox={840} oy={540} d={wingB} />
    <Wing i={2} ox={1080} oy={500} d={wingC} />
    <path d="M1145 371L949 865" stroke="#86b0ea" strokeWidth="3" strokeDasharray="17 4 6 4" fill="none" />
    <path d="M1145 371L949 865" stroke="#0c2f86" strokeWidth="1.500" strokeDasharray="17 4 6 4" fill="none" />
    <path d="M1003 727L976 798" stroke="#0c3f96" strokeWidth="3" />
    <g fontFamily="Liberation Sans, Arial, sans-serif" fontSize="10" textAnchor="middle" fill="#111">
      {bubbles.map(([t, x, y]) => <g key={t}><circle cx={x} cy={y} r="10.500" fill="#fff" stroke="#000" /><text x={x} y={y + 3}>{t}</text></g>)}
      <circle cx="945" cy="875" r="10.500" fill="#e4eefb" stroke="#86b0ea" strokeWidth="3" /><circle cx="945" cy="875" r="10.500" fill="none" stroke="#0c2f86" /><text x="945" y="878">6</text>
      <rect x="873" y="595" width="10" height="8" fill="#fff" /><rect x="1308" y="590" width="10" height="8" fill="#fff" />
      <text x="878" y="602" fontSize="7" fill="#3b7ec0">UP</text><text x="1313" y="597" fontSize="7" fill="#3b7ec0">UP</text>
    </g>
    <text x="808" y="324" transform="rotate(5 808 324)" fontFamily="DejaVu Sans, sans-serif" fontSize="12" textAnchor="middle" fill="#333">جلسات</text>
  </svg>
);

const x = <path d="M11 11L18 18M18 11L11 18" stroke="#c8640e" strokeWidth="2.600" />;
const crop = <><path d="M1 12H5V6H15V15" stroke="#2f78ba" strokeWidth="3" /><path d="M9 18V10H18M12 2V6" stroke={C.dark} strokeWidth="1.800" /></>;
const bulb = <><circle cx="15" cy="8" r="4" fill="#d7ecfb" stroke="#3c8fd2" strokeWidth="1.800" /><path d="M15 12V18" stroke="#3c8fd2" strokeWidth="3" /></>;
const viewIcons: [string, React.ReactNode][] = [
  ["Detail level", <rect x="1" y="2" width="18" height="15" fill="#e9ebee" key="a" />],
  ["Visual style", <path key="a" d="M1 8L6 3H19V11L14 17H1ZM1 8H14L19 3M14 8V17M3 12H12" fill="#a9d1f0" stroke={C.blue} />],
  ["Sun path", <g key="a"><circle cx="9" cy="8" r="5" fill="#ffe9a8" stroke="#e39a1d" strokeWidth="2" /><path d="M9 0V2M1 8H3M3 2L5 4M15 2L13 4M3 14L5 12" stroke="#e39a1d" strokeWidth="2" />{x}</g>],
  ["Shadows", <g key="a"><circle cx="10" cy="8" r="6" fill="#cfe4f6" stroke="#3c8fd2" /><path d="M2 17H12" strokeWidth="2.500" />{x}</g>],
  ["Crop view", <g key="a">{crop}{x}</g>],
  ["Show crop region", <g key="a">{crop}{bulb}</g>],
  ["Temporary hide", <path key="a" d="M1 5Q3 2 5 5L9 12M1 5Q4 10 9 12M9 12Q11 17 15 15Q20 12 18 9Q14 8 9 12M18 9Q19 5 15 3" />],
  ["Reveal hidden", <g key="a" transform="translate(-5 0)">{bulb}</g>],
  ["View properties", <g key="a"><path d="M3 4H17V16H3Z" strokeDasharray="2 1.500" strokeWidth="3.500" /><circle cx="13" cy="12" r="4" fill="#ddd" /></g>],
  ["Analytical model", <g key="a"><path d="M2 17V8L8 3H18V17M2 8H14V18M7 8V17M2 13H14" strokeWidth="1.800" /><path d="M2 13H7V17" stroke="#c8640e" strokeWidth="2" /><circle cx="15" cy="8" r="3" fill="#ffc04a" stroke="#d98318" /></g>],
  ["Constraints", <g key="a"><path d="M2 1V19M18 1V10M2 4H18M5 2L2 4L5 6M15 2L18 4L15 6" /><rect x="12" y="12" width="7" height="6" fill="#999" /></g>],
];

function DocumentArea() {
  return (
    <Doc>
      <DocTabs>
        <DocTab><Ico s={19}><path d="M1 2H15L19 6V18H1Z" fill="#d6d6d6" stroke="#888" /><path d="M4 6H13V15H10V9H4ZM4 12H7V15H4Z" stroke="#888" /></Ico>A103 - Unnamed</DocTab>
        <DocTab $on><PlanIcon s={19} />Level 1<Grow /><Cross /></DocTab>
        <Grow />
        <IconButton $w={24} aria-label="Open views"><Ico s={12}><path d="M1 3H19" strokeWidth="2.500" /><path d="M1 9H19L10 17Z" fill="#3a3a3a" stroke="none" /></Ico></IconButton>
      </DocTabs>
      <CanvasRow>
        <Canvas><FloorPlan /><Tip role="tooltip">Grids : Grid : 6</Tip></Canvas>
        <VScroll t="21px" center />
      </CanvasRow>
      <ViewBar>
        <Scale>1 : 100</Scale>
        {viewIcons.map(([n, g]) => <IconButton $w={25} key={n} aria-label={n}><Ico s={18} w={20}>{g}</Ico></IconButton>)}
        <IconButton $w={20} aria-label="Scroll left"><Chevron r={90} /></IconButton>
        <HTrack><span /></HTrack>
        <ScrollEnd $w={20} aria-label="Scroll right"><Chevron r={-90} /></ScrollEnd>
        <Ico s={14}><path d="M16 2V18M10 8V18M4 14V18" stroke="#bbb" strokeWidth="4" strokeDasharray="4 2" /></Ico>
      </ViewBar>
      <DocEdge />
    </Doc>
  );
}

/* ---------- project browser ---------- */
const Browser = styled.aside`width: 123px; flex: none; margin-left: 2px; background: ${C.light}; display: flex; flex-direction: column;`;
const BrowserBody = styled.div`flex: 1; min-height: 0; display: flex; padding-right: 1px;`;
const Tree = styled.ul`flex: 1; min-width: 0; margin: 0 0 0 2px; padding: 0; list-style: none; background: #fff; overflow: hidden; color: #111;`;
const Node = styled.li<{ $bold?: boolean }>`display: flex; align-items: center; height: 22px; white-space: nowrap; font-size: 14px; line-height: 20px; font-weight: ${p => (p.$bold ? 700 : 400)};`;
const vline = "linear-gradient(#999 50%, transparent 50%) 11px 0 / 1px 2px repeat-y";
const Guide = styled.span<{ $v?: boolean; $w?: number }>`
  flex: none; width: ${p => p.$w ?? 26}px; height: 22px; display: flex; align-items: center; padding-left: 5px;
  background: ${p => (p.$v ? vline : "none")}; background-origin: border-box;
`;
const Stub = styled.span<{ $w: number; $lead: number }>`width: ${p => p.$w}px; margin-left: ${p => p.$lead}px; border-top: 1px dotted #999;`;
const Box = styled.button`width: 13px; height: 13px; border: 1px solid #8a8a8a; border-radius: 2px; background: linear-gradient(#fff, #e4e4e4); display: flex; align-items: center; justify-content: center; flex: none;`;
const Toggle = ({ plus }: { plus?: boolean }) => (
  <Box aria-label={plus ? "Expand" : "Collapse"}><svg width="9" height="9" viewBox="0 0 9 9"><path d={plus ? "M0 4.500H9M4.500 0V9" : "M0 4.500H9"} stroke="#1f5fa8" /></svg></Box>
);
const RootLabel = styled.span`background: #dedede; padding: 0 3px; height: 20px; line-height: 19px; flex: 1; margin-left: 4px;`;
const HBar = styled.div`height: 19px; flex: none; display: flex; background: #f0f0f0; margin: 0 20px 3px 2px; > span { width: 22px; background: #cdcdcd; } > i { flex: 1; }`;
const lv = [1, 2, 3, 4].map(n => `Level ${n}`);
const branches: [string, boolean, string[]][] = [
  ["Structural Plans", true, []], ["Floor Plans", false, [...lv, "Site"]], ["Ceiling Plans", false, [...lv, "Level 5"]], ["3D Views", true, []],
  ["Elevations", false, ["East", "North", "South", "West"]], ["Renderings", false, Array.from({ length: 13 }, (_, i) => `3D View ${i + 1}`)],
];
function ProjectBrowser() {
  return (
    <Browser>
      <PaneHead>Project Brow...<button aria-label="Close browser"><Cross /></button></PaneHead>
      <BrowserBody>
        <Tree>
          <Node><Guide $w={25}><Toggle /></Guide><Ico s={21}><path d="M6 1H1V6M1 14V19H6M14 1H19V6M19 14V19H14" stroke="#555" /><path d="M6 8L8 6H15V12L13 14H6Z" fill="#ddd" /></Ico><RootLabel>Views (all)</RootLabel></Node>
          {branches.map(([n, plus, kids]) => (
            <React.Fragment key={n}>
              <Node><Guide $v /><Guide $v $w={31}><Toggle plus={plus} /><Stub $w={9} $lead={2} /></Guide>{n}</Node>
              {kids.map(k => <Node key={k} $bold={n === "Floor Plans" && k === "Level 1"}><Guide $v /><Guide $v /><Guide $v $w={32}><Stub $w={17} $lead={7} /></Guide>{k}</Node>)}
            </React.Fragment>
          ))}
        </Tree>
        <VScroll t="54%" />
      </BrowserBody>
      <HBar><IconButton $w={20} aria-label="Scroll left"><Chevron r={90} /></IconButton><span /><i /><IconButton $w={20} aria-label="Scroll right"><Chevron r={-90} /></IconButton></HBar>
    </Browser>
  );
}

/* ---------- status bar ---------- */
const Status = styled.footer`height: 32px; flex: none; display: flex; align-items: center; background: ${C.bar}; color: #222;`;
const StatusText = styled.span`width: 684px; padding-left: 2px;`;
const Count = styled.span<{ $w: number }>`width: ${p => p.$w}px; font-size: 14px;`;
const Muted = styled.span`color: #84847c; display: flex;`;
const sc = <g transform="translate(9 5)">{cursor}</g>;
const redx = <path d="M12 1L19 8M19 1L12 8" stroke="#c04e12" strokeWidth="2.600" />;
const selIcons: [string, React.ReactNode][] = [
  ["Select links", <g key="a"><circle cx="5" cy="6" r="3.500" stroke="#d9921b" strokeWidth="2.500" /><circle cx="15" cy="6" r="3.500" stroke="#d9921b" strokeWidth="2.500" /><path d="M6 6H14" stroke="#d9921b" strokeWidth="2.500" />{sc}</g>],
  ["Select underlay", <g key="a"><path d="M5 8L11 2H19L14 8ZM1 16L7 10H16L11 16Z" fill="#d7ecfb" stroke={C.blue} />{sc}</g>],
  ["Select pinned", <g key="a"><path d="M1 2H11V5H9V9H12V13H1V9H3V5H1Z" fill="#f2b25c" stroke="#b0641a" /><path d="M6 13V19" />{redx}{sc}</g>],
  ["Select by face", <g key="a"><path d="M1 5L11 2V15L1 18Z" fill="#a9d1f0" stroke={C.blue} />{redx}{sc}</g>],
  ["Drag on selection", <g key="a"><path d="M6 1V11M1 6H11M4 3L6 1L8 3M4 9L6 11L8 9" stroke="#222" />{redx}{sc}</g>],
  ["Background processes", <circle key="a" cx="10" cy="10" r="6.500" stroke="#a2a2a2" strokeWidth="4" strokeDasharray="3.500 1.600" />],
];

/* ---------- taskbar ---------- */
const Taskbar = styled.nav`height: 50px; flex: none; display: flex; background: ${C.task}; color: #fff;`;
const Search = styled.label`width: 430px; display: flex; align-items: center; gap: 14px; padding-left: 15px; background: #f2f2f2; border: 1px solid #c4c4c4; input { border: 0; background: none; outline: 0; font-size: 18px; color: #444; flex: 1; padding: 0; &::placeholder { color: #444; opacity: 1; } }`;
const App = styled.button<{ $w?: number; $run?: boolean; $on?: boolean }>`
  width: ${p => p.$w ?? 62}px; display: flex; align-items: center; justify-content: center; background: ${p => (p.$on ? "#4b4b4e" : "transparent")};
  ${p => (p.$run || p.$on) && css`background-image: linear-gradient(#76b9ed, #76b9ed); background-repeat: no-repeat; background-position: center bottom; background-size: ${p.$on ? "100%" : "51px"} 3px;`}
`;
const Clock = styled.button`width: 90px; font-size: 14px; line-height: 22px; text-align: center;`;
const Desktop = styled.button`width: 6px; border-left: 1px solid #777; margin-left: 13px;`;
const apps: [string, React.ReactNode, number?, boolean?, boolean?][] = [
  ["Cortana", <Ico s={22} key="a"><circle cx="10" cy="10" r="8" stroke="#fff" strokeWidth="2.600" /></Ico>, 60],
  ["Task view", <Ico s={20} key="a"><path d="M1 1V4H13V1M1 19V16H13V19M1 7H13V13H1ZM17 1V4M17 11V19" stroke="#fff" /><path d="M17 6V9" stroke="#fff" strokeWidth="3" /></Ico>, 61],
  ["Home", <Ico s={30} key="a"><circle cx="10" cy="10" r="10" fill="#fff" stroke="none" /><path d="M5 14.500Q2.500 12 3 9Q4 3 10 3Q16 3 17 9Q17.500 12 15 14.500" stroke="#222" strokeWidth="1.800" /><path d="M7 16V9.500L10 7L13 9.500V16" stroke="#222" strokeWidth="2" /></Ico>],
  ["Mail", <Ico s={30} key="a"><path d="M0 7L10 1L20 7V17.500H0Z" fill="#fff" stroke="none" /><path d="M2 7L9 11.500L18 7.500L11 14L9 11.500" stroke="#222" fill="#222" strokeWidth=".8" /></Ico>],
  ["Word", <Ico s={30} key="a"><path d="M3 1H19V19H1V15Z" fill="#d6e6f7" stroke="none" /><path d="M1 2L14 1V15H1Z" fill="#2b66b5" stroke="none" /><path d="M3 4L5 12L7.500 6L10 12L12 4" stroke="#fff" strokeWidth="1.800" /></Ico>],
  ["Photos", <Ico s={28} key="a"><rect x="1" y="1" width="18" height="18" fill="#222" stroke="#fff" strokeWidth="1.600" /><path d="M2 18L8 7L12 12L14 10L18 16V18Z" fill="#fff" stroke="none" /></Ico>, undefined, true],
  ["Edge", <Ico s={32} key="a"><g stroke="none"><circle cx="10" cy="10" r="9.500" fill="#1c7ed6" /><path d="M1 8Q4 0 11 .5Q19 1 19.500 9Q19 14 13 13Q16 8 10 6Q5 5 1 8Z" fill="#45c98c" /><path d="M8 9Q6 15 12 17Q16 18 18 15Q14 20 9 19Q3 17 5 11Q6 9 8 9Z" fill="#0c4fa0" /><path d="M9 10Q11 7 13 10Q12 13 19 13L19 15Q12 17 9 13Q8 12 9 10Z" fill="#202020" /></g></Ico>],
  ["File Explorer", <Ico s={30} key="a"><g stroke="none"><path d="M1 3H8L10 5H19V17H1Z" fill="#ffd667" /><path d="M1 3H7V5H1Z" fill="#e8a33d" /><path d="M4 18V10H16V18H13V13H7V18Z" fill="#3a94dc" /></g></Ico>, undefined, true],
  ["Snipping Tool", <Ico s={30} key="a"><ellipse cx="9" cy="7" rx="8" ry="5" transform="rotate(-18 9 7)" fill="#f4f0ea" stroke="#c9692a" strokeWidth=".8" /><path d="M2 12Q6 15 10 11" stroke="#bbb" strokeWidth="2" /><ellipse cx="12" cy="16" rx="2" ry="3.200" stroke="#2b8be0" /><ellipse cx="16" cy="13" rx="2.800" ry="2" stroke="#2b8be0" /><path d="M12 13L8 4" stroke="#999" /></Ico>],
  ["Revit", <Ico s={30} key="a"><rect width="20" height="20" fill="#e4eefa" stroke="none" /><path d="M5 2H11Q16 2 16 7Q16 10 13 11L17 17H13L10 12H9V17H5Z" fill="#1f66b0" stroke="none" /><path d="M9 5V9H10Q12 9 12 7Q12 5 10 5Z" fill="#e4eefa" stroke="none" /></Ico>, undefined, false, true],
];

const Watermark = styled.div`
  position: absolute; left: 44%; bottom: 24px; width: 230px; pointer-events: none; text-align: center; color: rgba(160,163,165,.36); line-height: 1;
  > b { display: block; direction: rtl; font: 700 66px/64px "DejaVu Sans", sans-serif; } > span { display: block; font: 700 36px/40px ${UI}; color: rgba(165,165,165,.5); }
`;

export default function RevitWindow() {
  return (
    <Shell>
      <Global />
      <TitleBar>
        {qat.map(([n, w, g], i) => n === "sep" ? <Sep $w={w} key={i} /> : <IconButton key={i} $w={w} aria-label={n === "caret" ? "More" : n}>{g ?? <Caret />}</IconButton>)}
        <Title>Autodesk Revit 2020 - <bdi>موتيل2</bdi> - Floor Plan: Level 1</Title>
        <IconButton $w={14} aria-label="Collapse search"><svg width="6" height="9" viewBox="0 0 6 9"><path d="M6 0V9L0 4.500Z" fill="#333" /></svg></IconButton>
        <IconButton $w={32} aria-label="Search"><Ico s={20}><path d="M3 8L5 1H8V8M12 8V1H15L17 8" fill="#eee" /><path d="M1 9H8V19H1ZM12 9H19V19H12ZM8 8H12V13H8Z" fill="#eee" /></Ico></IconButton>
        <IconButton aria-label="Account"><Ico s={20}><path d="M1 18Q2 14 8 13Q5 10 5 6Q5 1 10 1Q15 1 15 6Q15 10 12 13Q18 14 19 18Z" fill="#eee" /></Ico></IconButton>
        <SignIn>Sign In</SignIn>
        <IconButton $w={16} aria-label="Account menu"><Caret /></IconButton>
        <IconButton $w={36} aria-label="App store"><Ico s={21}><path d="M1 2H4L7 13H16M5 5H18L16 10H6" fill="#dfe8f2" stroke="#4a5a78" /><path d="M9 5V10M13 5V10" stroke="#4a5a78" /><circle cx="8" cy="17" r="1.700" /><circle cx="15" cy="17" r="1.700" /></Ico></IconButton>
        <Sep $w={8} />
        <IconButton $w={36} aria-label="Help"><Ico s={22}><circle cx="10" cy="10" r="9" fill="#f6f6f6" /><path d="M7 8Q7 5 10 5Q13 5 13 7.500Q13 9 10 11V12M10 14V16" stroke={C.blue} strokeWidth="2.200" /></Ico></IconButton>
        <IconButton $w={12} aria-label="Help menu"><Caret /></IconButton>
        <WindowButtons>
          <IconButton $w={31} aria-label="Minimize"><Ico s={18}><path d="M4 16H15" strokeWidth="3.500" stroke="#333" /></Ico></IconButton>
          <IconButton $w={31} aria-label="Restore"><Ico s={17}><path d="M6 7V3H18V12H14M6 4H18" stroke="#333" strokeWidth="2" /><path d="M2 8H14V17H2ZM2 9H14" stroke="#333" strokeWidth="2" /></Ico></IconButton>
          <IconButton $w={31} aria-label="Close"><Cross s={14} /></IconButton>
        </WindowButtons>
      </TitleBar>
      <Tabs>
        <Tab $kind="file">File</Tab><Tab $kind="active">Architecture</Tab>
        {tabNames.map(([t, p]) => <Tab key={t} $pad={p}>{t}</Tab>)}
        <IconButton $w={86} aria-label="Ribbon display"><Ico s={18}><rect x="1" y="5" width="18" height="11" rx="3" fill="#eee" /><path d="M7 12H13L10 8Z" fill="#333" /></Ico>&nbsp;<Caret /></IconButton>
      </Tabs>
      <Ribbon>
        <P title="Select" w={73} pad={9} arrow tools={[["Modify", "modify", 54]]} />
        <P title="Circulation" w={177} pad={9} tools={[["Railing", "railing", 62, "below"], ["Ramp", "ramp", 60], ["Stair", "stair", 36]]} />
        <P title="Model" w={173} pad={2} tools={[["Model\nText", "text", 50], ["Model\nLine", "line", 50], ["Model\nGroup", "group", 70, "side"]]} />
        <P title="Room & Area" w={378} pad={2} arrow tools={[["Room", "room", 48], ["Room\nSeparator", "roomsep", 74], ["Tag\nRoom", "tagroom", 66, "side"], ["Area", "area", 56, "below"], ["Area\nBoundary", "areab", 72, undefined, true], ["Tag\nArea", "tagarea", 54, "side"]]} />
        <P title="Build" w={676} pad={3} tools={[["Wall", "wall", 54, "below"], ["Door", "door", 50], ["Window", "window", 60], ["Component", "component", 110, "below"], ["Column", "column", 74, "below"], ["Roof", "roof", 66, "below"], ["Ceiling", "ceiling", 48], ["Floor", "floor", 68, "below"]]}>
          <SmallList names={["Curtain System", "Curtain Grid", "Mullion"]} left={3} />
        </P>
        <P title="Opening" w={191} pad={3} tools={[["By\nFace", "byface", 46], ["Shaft", "shaft", 48]]}><SmallList names={["Wall", "Vertical", "Dormer"]} left={6} /></P>
        <P title="Datum" w={80} pad={2} tools={[]}><SmallList names={["Level", "Grid"]} top={16} left={6} off="Level" /></P>
        <P title="Work Plane" w={158} pad={8} tools={[["Set", "set", 36]]}><SmallList names={["Show", "Ref Plane", "Viewer"]} left={10} /></P>
      </Ribbon>
      <Options />
      <Work><PropertiesPane /><DocumentArea /><ProjectBrowser /></Work>
      <Status>
        <StatusText>Grids : Grid : 6</StatusText>
        <IconButton $w={33} aria-label="Worksets"><Ico s={21}><path d="M1 9H9V18H1Z" fill="#79b7ea" stroke={C.blue} strokeWidth="2" /><path d="M6 9V2H13V7H9" fill="#f2efc8" stroke="#334" /><path d="M16 19V10M13 5V8Q13 10 16 10Q19 10 19 8V5" stroke="#334" strokeWidth="2" /></Ico></IconButton>
        <SelectBox $w={254} $white><Select aria-label="Active workset"><option></option></Select><Chevron w={1} c="#999" /></SelectBox>
        <IconButton $w={34} aria-label="Editing requests"><Ico s={20}><path d="M8 2H17V8H12V12L8 18H2Q3 12 9 11Z" fill="#aaa" stroke="#999" /></Ico></IconButton>
        <Count $w={31}>:0</Count>
        <IconButton aria-label="Design options"><Ico s={20}><rect x="1" y="1" width="18" height="18" fill="#eee" /><path d="M1 3H19" strokeWidth="3" /><path d="M4 8H7M9 8H16M9 12H11M13 12H17M9 16H11M13 16H17" strokeWidth="2" /></Ico></IconButton>
        <IconButton $w={34} aria-label="Add to set"><Ico s={20}><rect x="2" y="1" width="17" height="17" fill="#a6a6a6" stroke="#eee" /><path d="M1 13H8V9L13 14L8 19V16H1Z" fill="#aaa" stroke="#fff" /></Ico></IconButton>
        <Muted><SelectBox $w={254} $white><Select aria-label="Design option"><option>Main Model</option></Select><Chevron w={1} c="#999" /></SelectBox></Muted>
        <Grow />
        {selIcons.map(([n, g]) => <IconButton $w={30} key={n} aria-label={n}><Ico s={21}>{g}</Ico></IconButton>)}
        <IconButton $w={26} aria-label="Filter"><Ico s={20}><path d="M1 2H19V4L12 12V19L8 17V12L1 4Z" fill="#d5d8dc" /></Ico></IconButton>
        <Count $w={87}>:0</Count>
      </Status>
      <Taskbar>
        <App $w={60} aria-label="Start"><Ico s={20}><path d="M0 3L8.500 1.800V9.500H0ZM9.500 1.600L20 0V9.500H9.500ZM0 10.500H8.500V18.200L0 17ZM9.500 10.500H20V20L9.500 18.400Z" fill="#fff" stroke="none" /></Ico></App>
        <Search><Ico s={20}><circle cx="12.500" cy="7" r="6" stroke="#222" /><path d="M8 11.500L1 19" stroke="#222" /></Ico><input placeholder="Type here to search" aria-label="Search" /></Search>
        {apps.map(([n, g, w, run, on]) => <App key={n} $w={w} $run={run} $on={on} aria-label={n}>{g}</App>)}
        <Grow />
        <App $w={36} aria-label="Get help"><Ico s={28}><circle cx="9.500" cy="9.500" r="8.500" fill="#1b8fdc" stroke="#fff" strokeWidth="1.600" /><path d="M7 7.500Q7 5 9.500 5Q12 5 12 7.200Q12 9 9.500 10.500M9.500 12.500V14" stroke="#fff" strokeWidth="1.800" /><circle cx="16" cy="15.500" r="3.800" fill="#1b8fdc" stroke="none" /><path d="M16 13V14M16 15V18" stroke="#fff" /></Ico></App>
        <App $w={32} aria-label="Hidden icons"><Ico s={16}><path d="M1 14L10 5L19 14" stroke="#fff" strokeWidth="1.800" /></Ico></App>
        <App $w={32} aria-label="Battery"><Ico s={18}><rect x="1" y="5" width="16" height="10" stroke="#fff" /><rect x="3" y="7" width="12" height="6" fill="#fff" stroke="none" /><path d="M18.500 8V12" stroke="#fff" /></Ico></App>
        <App $w={30} aria-label="Volume"><Ico s={20}><path d="M1 7H4L8 3V17L4 13H1Z" stroke="#fff" strokeWidth="1.200" /><path d="M11 7.500Q13 10 11 12.500M14 5.500Q17 10 14 14.500M17 3.500Q21 10 17 16.500" stroke="#fff" strokeWidth="1.200" /></Ico></App>
        <App $w={40}>ع</App>
        <Clock>10:52 PM<br />12/18/2024</Clock>
        <App $w={44} aria-label="Notifications"><Ico s={20}><path d="M0 1H20V15H12L8 19V15H0Z" fill="#fff" stroke="none" /><path d="M4 5H16M4 8H16M4 11H12" stroke="#222" /><circle cx="16" cy="14" r="4" fill="#222" stroke="#fff" /></Ico></App>
        <Desktop aria-label="Show desktop" />
      </Taskbar>
      <Watermark aria-hidden="true"><b>مستقل</b><span>mostaql.com</span></Watermark>
    </Shell>
  );
}
